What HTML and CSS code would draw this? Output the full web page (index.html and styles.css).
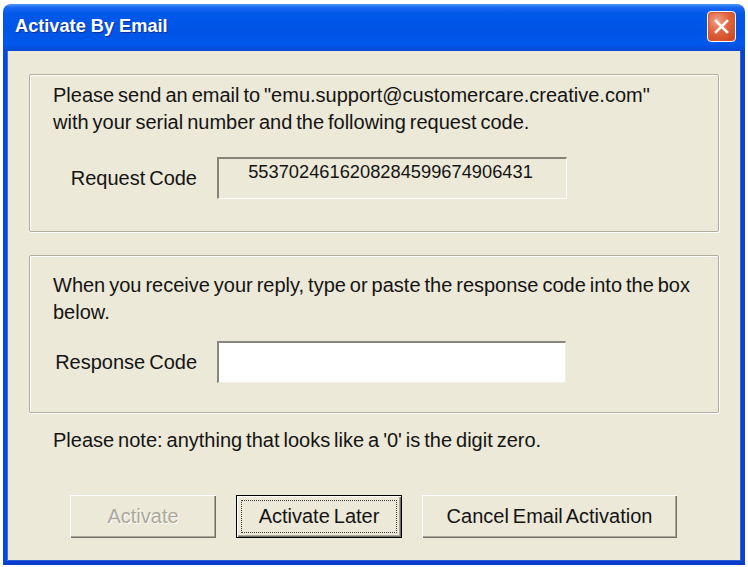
FILE: index.html
```html
<!DOCTYPE html>
<html>
<head>
<meta charset="utf-8">
<link rel="stylesheet" href="styles.css">
</head>
<body>
<div class="window">
  <div class="titlebar">
    <span class="title">Activate By Email</span>
    <button class="close" aria-label="Close">
      <svg width="17" height="17" viewBox="0 0 17 17"><path d="M3 3 L14 14 M14 3 L3 14" stroke="#fff" stroke-width="2.6" stroke-linecap="square"/></svg>
    </button>
  </div>
  <div class="client">
    <div class="group group-request">
      <p class="msg">Please send an email to "emu.support@customercare.creative.com"<br>with your serial number and the following request code.</p>
      <div class="row row-request">
        <span class="label">Request Code</span>
        <div class="field field-readonly">5537024616208284599674906431</div>
      </div>
    </div>
    <div class="group group-response">
      <p class="msg">When you receive your reply, type or paste the response code into the box<br>below.</p>
      <div class="row row-response">
        <span class="label">Response Code</span>
        <div class="field field-edit"></div>
      </div>
    </div>
    <p class="note">Please note: anything that looks like a '0' is the digit zero.</p>
    <div class="buttons">
      <button class="btn btn-disabled btn-activate">Activate</button>
      <button class="btn btn-default btn-later"><span class="focus">Activate Later</span></button>
      <button class="btn btn-cancel">Cancel Email Activation</button>
    </div>
  </div>
</div>
</body>
</html>
```
FILE: styles.css
```css
html, body {
  margin: 0;
  padding: 0;
  background: #ffffff;
}
body {
  padding: 4px 3px 0 3px;
  font-family: "Liberation Sans", Arial, sans-serif;
}
.window {
  width: 742px;
  height: 561px;
  display: flex;
  flex-direction: column;
  box-sizing: border-box;
}
.titlebar {
  height: 47px;
  flex: none;
  box-sizing: border-box;
  border-radius: 8px 8px 0 0;
  background: linear-gradient(to bottom, #4b96f6 0%, #1766f2 8%, #0058ea 22%, #0054e4 55%, #0058ec 85%, #0a48d2 100%);
  display: flex;
  align-items: center;
  padding: 0 8px 0 12px;
}
.title {
  color: #ffffff;
  font-family: "Liberation Sans", Arial, sans-serif;
  font-weight: bold;
  font-size: 18.2px;
  text-shadow: 1px 1px 0 #0b2f9e;
  margin-top: -2px;
  flex: 1;
}
.close {
  width: 29px;
  height: 31px;
  margin-top: -3px;
  margin-right: 1px;
  padding: 0;
  border: 1px solid #ffffff;
  border-radius: 4px;
  background: radial-gradient(circle at 35% 30%, #f2a58b 0%, #e2663f 40%, #c8401c 100%);
  display: flex;
  align-items: center;
  justify-content: center;
  box-shadow: inset 0 0 0 1px #d9532e;
}
.client {
  flex: 1;
  background: #ece9d8;
  border-left: 4px solid #0a47d8;
  border-right: 4px solid #0a43d2;
  border-bottom: 4px solid #0a3ccb;
  box-shadow: inset 1px 0 0 #3a73e6, inset -1px 0 0 #2b5ed8, inset 0 -1px 0 #2b5ed8;
  color: #141414;
  font-size: 20px;
  line-height: 27px;
  word-spacing: -1.6px;
  padding: 23px 22px 0 22px;
  display: flex;
  flex-direction: column;
}
.group {
  border: 1px solid #b1ae9f;
  box-shadow: inset 1px 1px 0 #ffffff, 1px 1px 0 #ffffff;
  border-radius: 2px;
  box-sizing: border-box;
  padding-left: 23px;
  padding-right: 10px;
}
.group-request {
  height: 158px;
  padding-top: 7px;
}
.group-response {
  height: 158px;
  margin-top: 23px;
  padding-top: 16px;
}
.msg {
  margin: 0;
  white-space: nowrap;
}
.row {
  display: flex;
  align-items: center;
  gap: 20px;
}
.row-request {
  margin-top: 21px;
}
.row-response {
  margin-top: 15px;
}
.label {
  width: 144px;
  text-align: right;
  flex: none;
}
.field {
  width: 350px;
  height: 42px;
  box-sizing: border-box;
  border-style: solid;
  border-width: 2px 1px 1px 2px;
  border-color: #868479 #fdfdfb #fdfdfb #868479;
}
.field-readonly {
  background: #ece9d8;
  font-size: 18.3px;
  line-height: 24px;
  text-align: center;
  padding-top: 1px;
  padding-right: 4px;
}
.field-edit {
  background: #ffffff;
  width: 349px;
  border-color: #8a887d #f1efe4 #f1efe4 #8a887d;
}
.note {
  margin: 14px 0 0 24px;
}
.buttons {
  display: flex;
  gap: 20px;
  margin-top: 41px;
  margin-left: 41px;
}
.btn {
  height: 43px;
  box-sizing: border-box;
  font-family: "Liberation Sans", Arial, sans-serif;
  font-size: 20px;
  word-spacing: -1.6px;
  color: #141414;
  background: #ece9d8;
  border: none;
  padding: 0;
  box-shadow: inset 1px 1px 0 #ffffff, inset -1px -1px 0 #716f64, inset -2px -2px 0 #aca899;
  display: flex;
  align-items: center;
  justify-content: center;
}
.btn-activate {
  width: 146px;
}
.btn-disabled {
  color: #aca899;
  text-shadow: 1px 1px 0 #ffffff;
}
.btn-later {
  width: 166px;
  border: 1px solid #000000;
  padding: 4px;
}
.focus {
  flex: 1;
  align-self: stretch;
  display: flex;
  align-items: center;
  justify-content: center;
  border: 1px dotted #3a3a3a;
}
.btn-cancel {
  width: 255px;
}
```
